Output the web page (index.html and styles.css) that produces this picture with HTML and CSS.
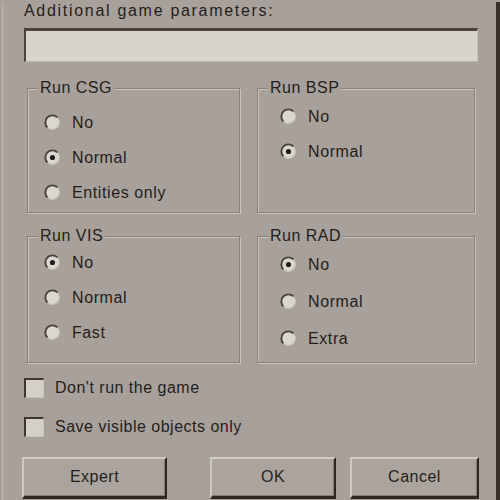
FILE: index.html
```html
<!DOCTYPE html>
<html>
<head>
<meta charset="utf-8">
<link rel="stylesheet" href="styles.css">
</head>
<body>
<div class="dialog">
  <div class="label">Additional game parameters:</div>
  <div class="field"></div>
  <div class="groups">
    <fieldset class="group g-csg">
      <legend>Run CSG</legend>
      <div class="opts">
        <div class="opt"><svg class="radio" viewBox="0 0 16 16"><circle cx="8" cy="8" r="6.5" fill="#dad6d0"/><path d="M3.2 12.6 A6.6 6.6 0 0 1 12.6 3.2" stroke="#4a413b" stroke-width="1.8" fill="none"/><path d="M13.2 4 A6.6 6.6 0 0 1 4 13.2" stroke="#c7c1bb" stroke-width="1.2" fill="none"/></svg><span>No</span></div>
        <div class="opt"><svg class="radio" viewBox="0 0 16 16"><circle cx="8" cy="8" r="6.5" fill="#dad6d0"/><path d="M3.2 12.6 A6.6 6.6 0 0 1 12.6 3.2" stroke="#4a413b" stroke-width="1.8" fill="none"/><path d="M13.2 4 A6.6 6.6 0 0 1 4 13.2" stroke="#c7c1bb" stroke-width="1.2" fill="none"/><circle cx="8" cy="8" r="2.4" fill="#1f1b18"/></svg><span>Normal</span></div>
        <div class="opt"><svg class="radio" viewBox="0 0 16 16"><circle cx="8" cy="8" r="6.5" fill="#dad6d0"/><path d="M3.2 12.6 A6.6 6.6 0 0 1 12.6 3.2" stroke="#4a413b" stroke-width="1.8" fill="none"/><path d="M13.2 4 A6.6 6.6 0 0 1 4 13.2" stroke="#c7c1bb" stroke-width="1.2" fill="none"/></svg><span>Entities only</span></div>
      </div>
    </fieldset>
    <fieldset class="group g-bsp">
      <legend>Run BSP</legend>
      <div class="opts">
        <div class="opt"><svg class="radio" viewBox="0 0 16 16"><circle cx="8" cy="8" r="6.5" fill="#dad6d0"/><path d="M3.2 12.6 A6.6 6.6 0 0 1 12.6 3.2" stroke="#4a413b" stroke-width="1.8" fill="none"/><path d="M13.2 4 A6.6 6.6 0 0 1 4 13.2" stroke="#c7c1bb" stroke-width="1.2" fill="none"/></svg><span>No</span></div>
        <div class="opt"><svg class="radio" viewBox="0 0 16 16"><circle cx="8" cy="8" r="6.5" fill="#dad6d0"/><path d="M3.2 12.6 A6.6 6.6 0 0 1 12.6 3.2" stroke="#4a413b" stroke-width="1.8" fill="none"/><path d="M13.2 4 A6.6 6.6 0 0 1 4 13.2" stroke="#c7c1bb" stroke-width="1.2" fill="none"/><circle cx="8" cy="8" r="2.4" fill="#1f1b18"/></svg><span>Normal</span></div>
      </div>
    </fieldset>
    <fieldset class="group g-vis">
      <legend>Run VIS</legend>
      <div class="opts">
        <div class="opt"><svg class="radio" viewBox="0 0 16 16"><circle cx="8" cy="8" r="6.5" fill="#dad6d0"/><path d="M3.2 12.6 A6.6 6.6 0 0 1 12.6 3.2" stroke="#4a413b" stroke-width="1.8" fill="none"/><path d="M13.2 4 A6.6 6.6 0 0 1 4 13.2" stroke="#c7c1bb" stroke-width="1.2" fill="none"/><circle cx="8" cy="8" r="2.4" fill="#1f1b18"/></svg><span>No</span></div>
        <div class="opt"><svg class="radio" viewBox="0 0 16 16"><circle cx="8" cy="8" r="6.5" fill="#dad6d0"/><path d="M3.2 12.6 A6.6 6.6 0 0 1 12.6 3.2" stroke="#4a413b" stroke-width="1.8" fill="none"/><path d="M13.2 4 A6.6 6.6 0 0 1 4 13.2" stroke="#c7c1bb" stroke-width="1.2" fill="none"/></svg><span>Normal</span></div>
        <div class="opt"><svg class="radio" viewBox="0 0 16 16"><circle cx="8" cy="8" r="6.5" fill="#dad6d0"/><path d="M3.2 12.6 A6.6 6.6 0 0 1 12.6 3.2" stroke="#4a413b" stroke-width="1.8" fill="none"/><path d="M13.2 4 A6.6 6.6 0 0 1 4 13.2" stroke="#c7c1bb" stroke-width="1.2" fill="none"/></svg><span>Fast</span></div>
      </div>
    </fieldset>
    <fieldset class="group g-rad">
      <legend>Run RAD</legend>
      <div class="opts">
        <div class="opt"><svg class="radio" viewBox="0 0 16 16"><circle cx="8" cy="8" r="6.5" fill="#dad6d0"/><path d="M3.2 12.6 A6.6 6.6 0 0 1 12.6 3.2" stroke="#4a413b" stroke-width="1.8" fill="none"/><path d="M13.2 4 A6.6 6.6 0 0 1 4 13.2" stroke="#c7c1bb" stroke-width="1.2" fill="none"/><circle cx="8" cy="8" r="2.4" fill="#1f1b18"/></svg><span>No</span></div>
        <div class="opt"><svg class="radio" viewBox="0 0 16 16"><circle cx="8" cy="8" r="6.5" fill="#dad6d0"/><path d="M3.2 12.6 A6.6 6.6 0 0 1 12.6 3.2" stroke="#4a413b" stroke-width="1.8" fill="none"/><path d="M13.2 4 A6.6 6.6 0 0 1 4 13.2" stroke="#c7c1bb" stroke-width="1.2" fill="none"/></svg><span>Normal</span></div>
        <div class="opt"><svg class="radio" viewBox="0 0 16 16"><circle cx="8" cy="8" r="6.5" fill="#dad6d0"/><path d="M3.2 12.6 A6.6 6.6 0 0 1 12.6 3.2" stroke="#4a413b" stroke-width="1.8" fill="none"/><path d="M13.2 4 A6.6 6.6 0 0 1 4 13.2" stroke="#c7c1bb" stroke-width="1.2" fill="none"/></svg><span>Extra</span></div>
      </div>
    </fieldset>
  </div>
  <div class="checks">
    <div class="check"><span class="box"></span><span>Don't run the game</span></div>
    <div class="check"><span class="box"></span><span>Save visible objects only</span></div>
  </div>
  <div class="buttons">
    <div class="btn btn-expert">Expert</div>
    <div class="btn btn-ok">OK</div>
    <div class="btn btn-cancel">Cancel</div>
  </div>
</div>
</body>
</html>
```
FILE: styles.css
```css
html, body {
  margin: 0;
  padding: 0;
}
body {
  width: 500px;
  height: 500px;
  overflow: hidden;
  background: #a8a19b;
  font-family: "Liberation Sans", Arial, sans-serif;
  font-size: 16px;
  color: #231e1b;
}
.dialog {
  box-sizing: border-box;
  width: 500px;
  height: 500px;
  border-right: 4px solid #3a2f29;
  border-left: 1px solid #a29b95;
  box-shadow: inset 3px 0 0 #b2aba5;
}
.label {
  margin: 2px 0 0 23px;
  line-height: 18px;
  letter-spacing: 1.7px;
  white-space: nowrap;
}
.field {
  box-sizing: border-box;
  margin: 8px 0 0 23px;
  width: 454px;
  height: 34px;
  background: #d8d3cc;
  border-top: 3px solid #4c433d;
  border-left: 2px solid #4c433d;
  border-right: 1px solid #c9c3bd;
  border-bottom: 1px solid #bdb7b1;
}
.groups {
  display: grid;
  grid-template-columns: 213px 218px;
  grid-template-rows: 134px 136px;
  column-gap: 17px;
  row-gap: 14px;
  margin: 17px 0 0 26px;
}
.group {
  margin: 0;
  padding: 0;
  min-width: 0;
  border: 1px solid #888079;
  box-shadow: inset 1px 1px 0 #cac4be, 1px 1px 0 #cac4be;
}
.group legend {
  margin-left: 10px;
  padding: 0 2px;
  line-height: 18px;
  letter-spacing: 0.5px;
  background: #a8a19b;
}
.opts {
  padding-left: 16px;
}
.g-csg .opts { padding-top: 8px; }
.g-bsp .opts { padding-top: 2px; padding-left: 22px; }
.g-vis .opts { padding-top: 0; }
.g-rad .opts { padding-top: 1px; padding-left: 22px; }
.g-rad .opt { height: 37px; }
.opt {
  display: flex;
  align-items: center;
  gap: 11px;
  height: 35px;
  letter-spacing: 0.6px;
  white-space: nowrap;
}
.radio {
  width: 17px;
  height: 17px;
  flex: none;
}
.checks {
  margin: 5px 0 0 23px;
}
.check {
  display: flex;
  align-items: center;
  gap: 11px;
  height: 39px;
  letter-spacing: 0.5px;
  white-space: nowrap;
}
.box {
  box-sizing: border-box;
  width: 20px;
  height: 20px;
  flex: none;
  background: #d4cfc9;
  border-top: 2px solid #3e3530;
  border-left: 2px solid #3e3530;
  border-right: 1px solid #c8c2bc;
  border-bottom: 1px solid #c8c2bc;
}
.buttons {
  display: flex;
  margin: 11px 0 0 21px;
}
.btn {
  box-sizing: border-box;
  height: 42px;
  display: flex;
  align-items: center;
  justify-content: center;
  letter-spacing: 0.5px;
  background: #aba49e;
  border-top: 2px solid #d3cdc7;
  border-left: 2px solid #cfc9c3;
  border-right: 2px solid #2f2722;
  border-bottom: 3px solid #2f2722;
  box-shadow: inset -1px -1px 0 #857d77;
  padding-bottom: 1px;
}
.btn-expert { width: 145px; }
.btn-ok { width: 126px; margin-left: 43px; }
.btn-cancel { width: 129px; margin-left: 14px; }
```
